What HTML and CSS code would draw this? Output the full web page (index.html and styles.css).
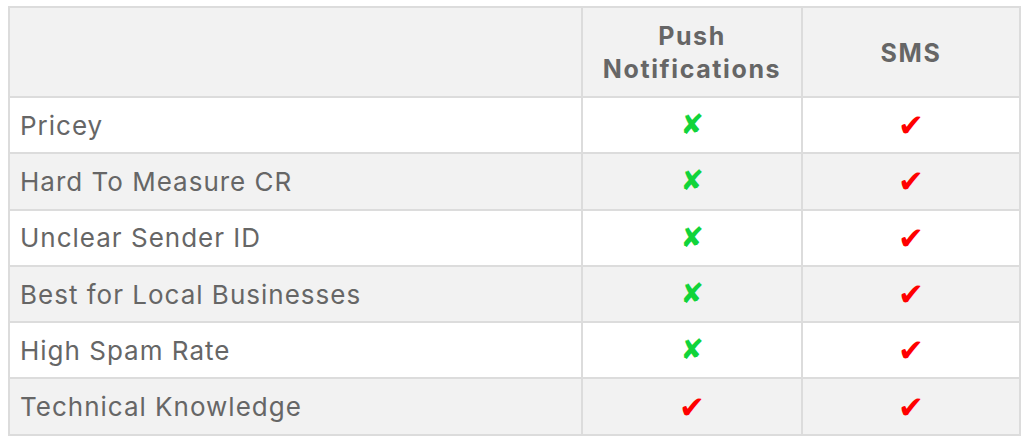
FILE: index.html
```html
<!DOCTYPE html>
<html>
<head>
<meta charset="utf-8">
<link rel="stylesheet" href="styles.css">
</head>
<body>
<table class="cmp">
  <colgroup>
    <col class="c-label">
    <col class="c-push">
    <col class="c-sms">
  </colgroup>
  <thead>
    <tr class="head">
      <th></th>
      <th>Push<br>Notifications</th>
      <th>SMS</th>
    </tr>
  </thead>
  <tbody>
    <tr><td class="label">Pricey</td><td class="mark no">✘</td><td class="mark yes">✔</td></tr>
    <tr><td class="label">Hard To Measure CR</td><td class="mark no">✘</td><td class="mark yes">✔</td></tr>
    <tr><td class="label">Unclear Sender ID</td><td class="mark no">✘</td><td class="mark yes">✔</td></tr>
    <tr><td class="label">Best for Local Businesses</td><td class="mark no">✘</td><td class="mark yes">✔</td></tr>
    <tr><td class="label">High Spam Rate</td><td class="mark no">✘</td><td class="mark yes">✔</td></tr>
    <tr><td class="label">Technical Knowledge</td><td class="mark yes">✔</td><td class="mark yes">✔</td></tr>
  </tbody>
</table>
</body>
</html>
```
FILE: styles.css
```css
html, body {
  margin: 0;
  padding: 0;
  background: #ffffff;
}
body {
  padding: 6px 5px 0 8px;
  font-family: Inter, "DejaVu Sans", sans-serif;
  color: #666666;
}
.cmp {
  width: 1011px;
  border-collapse: collapse;
  border: 2px solid #dcdcdc;
  table-layout: fixed;
}
.c-label { width: 573px; }
.c-push { width: 220px; }
.c-sms { width: 218px; }
.cmp th, .cmp td {
  border: 2px solid #dcdcdc;
  padding: 0;
}
.head {
  height: 90px;
  background: #f2f2f2;
}
.head th {
  font-weight: 700;
  font-size: 25px;
  letter-spacing: 1.6px;
  line-height: 33px;
  color: #666666;
  text-align: center;
  padding-top: 2px;
}
.cmp tbody tr {
  height: 56.3px;
  background: #ffffff;
}
.cmp tbody tr:nth-child(even) {
  background: #f2f2f2;
}
.label {
  font-size: 26px;
  letter-spacing: 1px;
  padding-left: 10px !important;
  color: #666666;
  text-align: left;
}
.mark {
  text-align: center;
  font-family: "DejaVu Sans", sans-serif;
  line-height: 30px;
}
.no { color: #11d43a; font-size: 28px; }
.yes { color: #ff0000; font-size: 31px; }
```
